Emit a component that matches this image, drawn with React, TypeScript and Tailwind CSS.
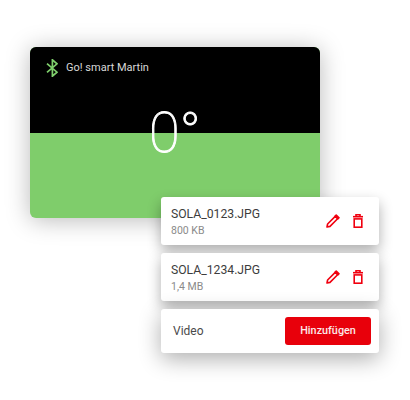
import React from "react";

function Pencil() {
  return (
    <svg width="14" height="14" viewBox="0 0 14 14" fill="none" stroke="#f0000f" strokeWidth="1.6" strokeLinejoin="round">
      <path d="M1 13l.6-3L9.2 2.4l2.4 2.4L4 12.4z" />
      <path d="M10.2 1l2.8 2.8-1 1-2.8-2.8z" fill="#f0000f" />
    </svg>
  );
}

function Trash() {
  return (
    <svg width="10" height="14" viewBox="0 0 10 14" fill="none" stroke="#f0000f" strokeWidth="1.6">
      <path d="M0 2.7h10" />
      <path d="M3 2.5V0.8h4v1.7" />
      <rect x="1.2" y="4.9" width="7.6" height="8.3" />
    </svg>
  );
}

function Bluetooth() {
  return (
    <svg width="12" height="18" viewBox="0 0 12 18" fill="none" stroke="#7fcf6c" strokeWidth="1.7">
      <path d="M1 4.6l10 8.6-4.6 4V0.8l4.6 4L1 13.4" />
    </svg>
  );
}

function FileRow({ name, size }: { name: string; size: string }) {
  return (
    <div className="flex h-[48px] items-center justify-between rounded-[3px] bg-white pl-[10px] pr-[16px] shadow-[0_6px_14px_rgba(0,0,0,0.32)]">
      <div className="flex flex-col pt-[2px]">
        <span className="text-[12.2px] leading-[17px] text-[#3d3d3d]">{name}</span>
        <span className="text-[10.5px] leading-[15px] text-[#8a8a8a]">{size}</span>
      </div>
      <div className="flex items-center gap-[13px]">
        <Pencil />
        <Trash />
      </div>
    </div>
  );
}

export default function App() {
  return (
    <div className="h-[400px] w-[410px] overflow-hidden bg-white pl-[30px] pt-[47px] font-['Roboto',sans-serif]">
      <div className="relative h-[171px] w-[290px] overflow-hidden rounded-[6px] bg-[#7fcd6b] shadow-[0_2px_24px_rgba(0,0,0,0.28)]">
        <div className="h-[86px] bg-black pl-[16px] pt-[12px]">
          <div className="flex items-center gap-[8px]">
            <Bluetooth />
            <span className="text-[11px] text-[#d8d8d8]">Go! smart Martin</span>
          </div>
        </div>
        <div className="absolute inset-x-0 top-[56px] text-center text-[56px] font-thin leading-[60px] text-white [-webkit-text-stroke:0.9px_white]">
          0°
        </div>
      </div>
      <div className="relative -mt-[21px] ml-[131px] flex w-[218px] flex-col gap-[8px]">
        <FileRow name="SOLA_0123.JPG" size="800 KB" />
        <FileRow name="SOLA_1234.JPG" size="1,4 MB" />
        <div className="flex h-[44px] items-center justify-between rounded-[3px] bg-white pl-[12px] pr-[8px] shadow-[0_6px_22px_rgba(0,0,0,0.32)]">
          <span className="text-[12px] text-[#4a4a4a]">Video</span>
          <button className="flex h-[28px] w-[86px] items-center justify-center rounded-[3px] bg-[#e8000b] text-[10.8px] font-medium text-[#fbe9e9]">
            Hinzufügen
          </button>
        </div>
      </div>
    </div>
  );
}
